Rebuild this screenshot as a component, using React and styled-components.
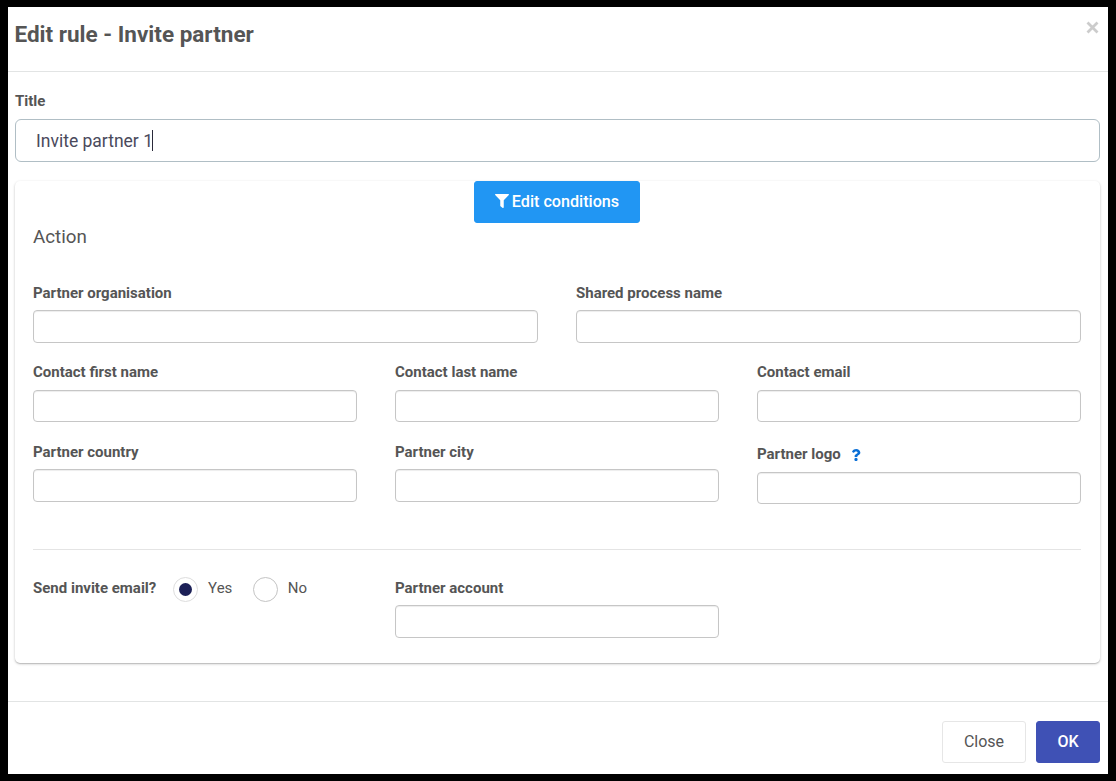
import React from "react";
import styled, { createGlobalStyle } from "styled-components";
import { FaFilter, FaQuestion } from "react-icons/fa";

const GlobalStyle = createGlobalStyle`
  *, *::before, *::after { box-sizing: border-box; }
  body {
    margin: 0;
    background: #000;
    color: #555;
    font-family: Roboto, "Liberation Sans", sans-serif;
    font-size: 15px;
  }
`;

const Backdrop = styled.div`
  height: 781px;
  padding: 7px 8px;
  background: #000;
`;

const Dialog = styled.div`
  display: flex;
  flex-direction: column;
  height: 767px;
  background: #fff;
`;

const Header = styled.header`
  display: flex;
  justify-content: space-between;
  align-items: flex-start;
  height: 65px;
  padding: 12px 9px 0 6.5px;
  border-bottom: 1px solid #e2e4e4;
`;

const Heading = styled.h1`
  margin: 0;
  font-size: 22.5px;
  line-height: 30px;
  font-weight: 700;
  color: #555;
`;

const Dismiss = styled.button`
  display: flex;
  margin: 2px 0 0;
  padding: 0;
  border: 0;
  background: none;
  color: #ccc;
`;

const Body = styled.main`
  flex: 1;
  padding: 19px 8px 0 7px;
`;

const Label = styled.label`
  display: flex;
  align-items: center;
  height: 20px;
  font-size: 15px;
  line-height: 20px;
  font-weight: 700;
  white-space: nowrap;
  svg { margin: 1px 0 0 9.5px; color: #0a6fd6; }
`;

const TitleInput = styled.div`
  display: flex;
  align-items: center;
  height: 43px;
  margin-top: 8px;
  padding: 0 20px;
  border: 1px solid #b0bec5;
  border-radius: 6px;
  font-size: 17.5px;
  color: #4a4a5c;
`;

const Caret = styled.span`
  width: 1px;
  height: 21px;
  margin-left: -1px;
  background: #2a2a3a;
`;

const Card = styled.section`
  height: 482px;
  margin-top: 19px;
  padding: 0 19px 0 18px;
  border-radius: 5px;
  background: #fff;
  box-shadow: 0 1px 3px rgba(0, 0, 0, 0.2), 0 1px 1px rgba(0, 0, 0, 0.14);
`;

const Toolbar = styled.div`
  display: flex;
  justify-content: center;
`;

const Button = styled.button`
  display: flex;
  align-items: center;
  justify-content: center;
  gap: 3px;
  width: ${(p) => p.$width}px;
  height: 42px;
  padding: 0 0 2px;
  border: 1px solid ${(p) => p.$border || p.$bg};
  border-radius: 3px;
  background: ${(p) => p.$bg};
  color: ${(p) => p.$color || "#fff"};
  font-family: inherit;
  font-size: ${(p) => p.$size || 16}px;
  font-weight: ${(p) => p.$weight || 400};
`;

const SectionTitle = styled.h2`
  margin: 2px 0 33.9px;
  font-size: 18.8px;
  line-height: 24px;
  font-weight: 400;
`;

const Row = styled.div`
  display: grid;
  grid-template-columns: repeat(${(p) => p.$columns}, 1fr);
  column-gap: 38px;
  height: 79.6px;
`;

const Field = styled.div`
  padding-top: ${(p) => p.$drop || 0}px;
`;

const Input = styled.input`
  display: block;
  width: 100%;
  height: 32.5px;
  margin: 7.3px 0 0;
  padding: 0 10px;
  border: 1px solid #c6c6c6;
  border-radius: 4px;
  outline: 0;
  background: #fff;
  box-shadow: inset 0 1px 1px rgba(0, 0, 0, 0.075);
`;

const Divider = styled.hr`
  height: 1px;
  margin: 27px 0 28.4px;
  border: 0;
  background: #e4e4e4;
`;

const RadioGroup = styled.div`
  display: flex;
  align-items: flex-start;
  line-height: 20px;
`;

const Radio = styled.span`
  display: flex;
  align-items: center;
  justify-content: center;
  width: 25px;
  height: 25px;
  margin: -1px 10px 0 ${(p) => p.$gap}px;
  border: 1px solid ${(p) => (p.$checked ? "#ddd" : "#c4c4c4")};
  border-radius: 50%;
  &::after {
    content: "";
    width: 13px;
    height: 13px;
    margin-top: -1px;
    border-radius: 50%;
    background: ${(p) => (p.$checked ? "#1c2057" : "transparent")};
  }
`;

const Footer = styled.footer`
  display: flex;
  justify-content: flex-end;
  gap: 10px;
  height: 73px;
  padding: 19px 8px 0;
  border-top: 1px solid #e2e4e4;
`;

function TextField({ label, help, drop }) {
  return (
    <Field $drop={drop}>
      <Label>
        {label}
        {help && <FaQuestion size={12} />}
      </Label>
      <Input aria-label={label} />
    </Field>
  );
}

export default function App() {
  return (
    <>
      <GlobalStyle />
      <Backdrop>
        <Dialog>
          <Header>
            <Heading>Edit rule - Invite partner</Heading>
            <Dismiss aria-label="Dismiss">
              <svg width="13" height="13" viewBox="0 0 13 13" fill="none" stroke="currentColor" strokeWidth="2.8">
                <path d="M1.5 1.5 11.5 11.5M11.5 1.5 1.5 11.5" />
              </svg>
            </Dismiss>
          </Header>
          <Body>
            <Label>Title</Label>
            <TitleInput>
              Invite partner 1<Caret />
            </TitleInput>
            <Card>
              <Toolbar>
                <Button $width={166} $bg="#2196f3" $size={16.15} $weight={500}>
                  <FaFilter size={14} />
                  Edit conditions
                </Button>
              </Toolbar>
              <SectionTitle>Action</SectionTitle>
              <Row $columns={2}>
                <TextField label="Partner organisation" />
                <TextField label="Shared process name" />
              </Row>
              <Row $columns={3}>
                <TextField label="Contact first name" />
                <TextField label="Contact last name" />
                <TextField label="Contact email" />
              </Row>
              <Row $columns={3}>
                <TextField label="Partner country" />
                <TextField label="Partner city" />
                <TextField label="Partner logo" help drop={2.3} />
              </Row>
              <Divider />
              <Row $columns={3}>
                <RadioGroup>
                  <Label>Send invite email?</Label>
                  <Radio $checked $gap={16.8} />
                  Yes
                  <Radio $gap={20.5} />
                  No
                </RadioGroup>
                <TextField label="Partner account" />
              </Row>
            </Card>
          </Body>
          <Footer>
            <Button $width={84} $bg="#fff" $border="#e6e6e6" $color="#555">
              Close
            </Button>
            <Button $width={64} $bg="#3f51b5" $weight={500}>
              OK
            </Button>
          </Footer>
        </Dialog>
      </Backdrop>
    </>
  );
}
